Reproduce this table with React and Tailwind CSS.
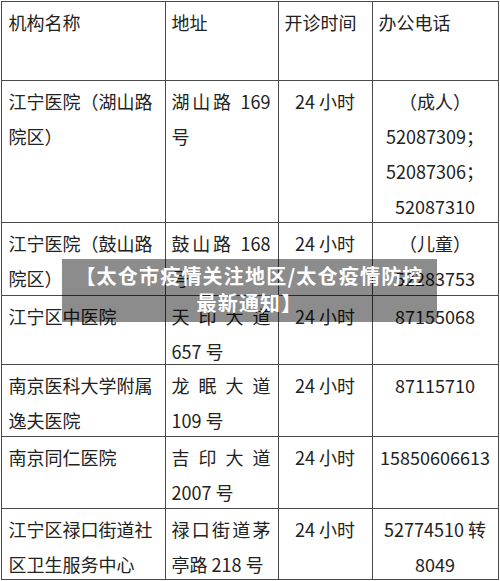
const rows = [
  {
    h: "h-[142px]",
    name: ["江宁医院（湖山路", "院区）"],
    addr: ["湖山路 169", "号"],
    phone: ["（成人）", "52087309；", "52087306；", "52087310"],
  },
  {
    h: "h-[73px]",
    name: ["江宁医院（鼓山路", "院区）"],
    addr: ["鼓山路 168", "号"],
    phone: ["（儿童）", "52283753"],
  },
  {
    h: "h-[69px]",
    name: ["江宁区中医院"],
    addr: ["天印大道", "657 号"],
    phone: ["87155068"],
  },
  {
    h: "h-[72px]",
    name: ["南京医科大学附属", "逸夫医院"],
    addr: ["龙眠大道", "109 号"],
    phone: ["87115710"],
  },
  {
    h: "h-[72px]",
    name: ["南京同仁医院"],
    addr: ["吉印大道", "2007 号"],
    phone: ["15850606613"],
  },
  {
    h: "h-[71px]",
    name: ["江宁区禄口街道社", "区卫生服务中心"],
    addr: ["禄口街道茅", "亭路 218 号"],
    phone: ["52774510 转", "8049"],
  },
];

// rows keep their own heights, text may hang a few px into the bottom padding
const cell = "border border-[#4a4a4a] align-top pt-[3px] leading-[35px]";

const Lines = ({ items, justifyFirst }) => (
  <div className="-mb-[10px]">
    {items.map((l, j) => (
      <div
        key={j}
        className={
          justifyFirst && j === 0 && items.length > 1
            ? "text-justify [text-align-last:justify] whitespace-nowrap"
            : "whitespace-nowrap"
        }
      >
        {l}
      </div>
    ))}
  </div>
);

export default function App() {
  return (
    <div
      className="relative w-[500px] h-[581px] bg-white text-[18px] text-[#222] overflow-hidden"
      style={{ fontFamily: '"Noto Sans CJK SC", "Noto Sans", sans-serif' }}
    >
      <table className="table-fixed border-collapse w-[497px] ml-[0.5px] mt-[1px]">
        <colgroup>
          <col className="w-[164px]" />
          <col className="w-[113px]" />
          <col className="w-[94px]" />
          <col className="w-[126px]" />
        </colgroup>
        <tbody>
          <tr className="h-[79px]">
            <td className={`${cell} pl-[7px]`}>机构名称</td>
            <td className={`${cell} pl-[6px]`}>地址</td>
            <td className={`${cell} pl-[6px]`}>开诊时间</td>
            <td className={`${cell} pl-[6px]`}>办公电话</td>
          </tr>
          {rows.map((r, i) => (
            <tr key={i} className={r.h}>
              <td className={`${cell} pl-[7px] pr-[6px]`}>
                <Lines items={r.name} />
              </td>
              <td className={`${cell} pl-[6px] pr-[7px]`}>
                <Lines items={r.addr} justifyFirst />
              </td>
              <td className={`${cell} text-center`}>
                <Lines items={["24 小时"]} />
              </td>
              <td className={`${cell} text-center px-[2px]`}>
                <Lines items={r.phone} />
              </td>
            </tr>
          ))}
        </tbody>
      </table>

      <div className="absolute left-[62px] top-[259px] w-[375px] h-[63px] pb-[4px] bg-black/45 flex flex-col items-center justify-center text-white font-bold text-[20px] leading-[27px] tracking-[1.2px]">
        <div className="whitespace-nowrap">【太仓市疫情关注地区/太仓疫情防控</div>
        <div className="whitespace-nowrap">最新通知】</div>
      </div>
    </div>
  );
}
